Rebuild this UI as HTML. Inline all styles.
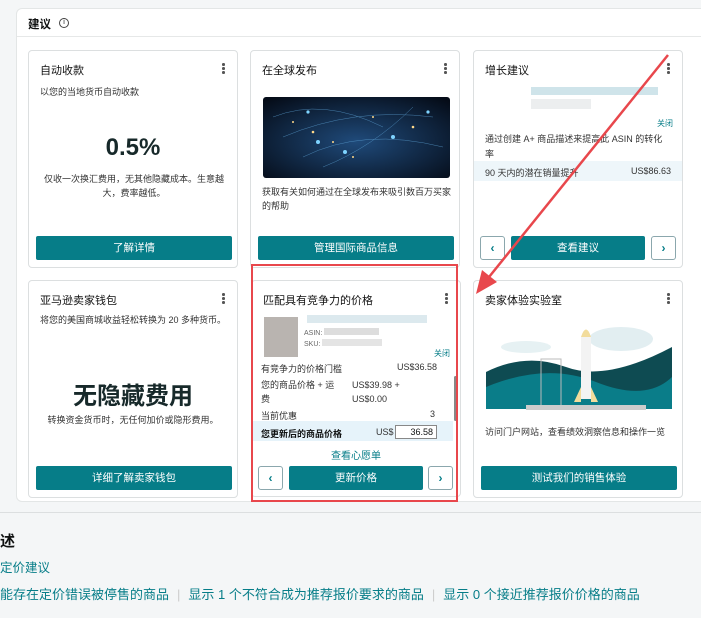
<!DOCTYPE html>
<html><head><meta charset="utf-8"><style>
*{box-sizing:border-box;margin:0;padding:0}
body{width:701px;height:618px;overflow:hidden;background:#f4f6f7;font-family:"Liberation Sans","Noto Sans CJK SC",sans-serif;color:#0f1111;position:relative;font-size:10px}
.a{position:absolute}
.panel{left:16px;top:8px;width:700px;height:494px;background:#fff;border:1px solid #e3e6e6;border-radius:6px}
.card{position:absolute;background:#fff;border:1px solid #dcdfe0;border-radius:4px;width:210px;height:218px}
.t{position:absolute;left:11px;top:11px;font-size:11px;color:#111}
.dots{position:absolute;right:12px;top:12px;width:3px}
.dots i{display:block;width:2.5px;height:2.5px;background:#555;border-radius:50%;margin-bottom:1.5px}
.btn{position:absolute;background:#067d88;color:#fff;font-size:10.5px;text-align:center;line-height:24px;height:24px;border-radius:2px}
.nav{position:absolute;width:25px;height:24px;border:1px solid #8ba7ad;border-radius:3px;color:#067d88;text-align:center;line-height:22px;font-size:12px;font-weight:bold;background:#fff}
.s{font-size:9px;color:#333}
</style></head><body>
<div class="a panel"></div>
<div class="a" style="left:28px;top:16px;font-size:11.5px;font-weight:bold">建议</div>
<div class="a" style="left:59px;top:18px;width:10px;height:10px;border:1px solid #444;border-radius:50%;font-size:7px;text-align:center;line-height:8px">i</div>
<div class="a" style="left:17px;top:36px;width:684px;height:1px;background:#e6e8e8"></div>

<div class="card" style="left:28px;top:50px">
<div class="t">自动收款</div><div class="dots"><i></i><i></i><i></i></div>
<div class="a s" style="left:11px;top:34px">以您的当地货币自动收款</div>
<div class="a" style="left:0;width:100%;top:83px;text-align:center;font-size:24px;font-weight:bold;color:#17292a">0.5%</div>
<div class="a s" style="left:12px;width:186px;top:121px;text-align:center;line-height:14px">仅收一次换汇费用，无其他隐藏成本。生意越大，费率越低。</div>
<div class="btn" style="left:7px;width:196px;top:185px">了解详情</div>
</div>

<div class="card" style="left:250px;top:50px">
<div class="t">在全球发布</div><div class="dots"><i></i><i></i><i></i></div>
<svg class="a" style="left:12px;top:46px" width="187" height="81"><defs><radialGradient id="g" cx="50%" cy="55%" r="70%"><stop offset="0" stop-color="#1f4a7a"/><stop offset="1" stop-color="#050c18"/></radialGradient></defs><rect width="187" height="81" rx="3" fill="url(#g)"/>
<g stroke="#5fa5d8" stroke-width="0.5" fill="none" opacity="0.7"><path d="M10 20Q60 0 120 30"/><path d="M20 40Q90 10 170 20"/><path d="M40 60Q100 30 180 50"/><path d="M60 70Q110 50 150 10"/></g>
<g fill="#ffd98a"><circle cx="30" cy="25" r="1"/><circle cx="50" cy="35" r="1.3"/><circle cx="70" cy="45" r="1"/><circle cx="110" cy="20" r="1"/><circle cx="150" cy="30" r="1.3"/><circle cx="90" cy="60" r="1"/></g>
<g fill="#7fd4ff"><circle cx="55" cy="45" r="2"/><circle cx="82" cy="55" r="2"/><circle cx="130" cy="40" r="2"/><circle cx="165" cy="15" r="1.6"/><circle cx="45" cy="15" r="1.6"/></g></svg>
<div class="a s" style="left:11px;top:134px;width:190px;line-height:14px">获取有关如何通过在全球发布来吸引数百万买家的帮助</div>
<div class="btn" style="left:7px;width:196px;top:185px">管理国际商品信息</div>
</div>

<div class="card" style="left:473px;top:50px">
<div class="t">增长建议</div><div class="dots"><i></i><i></i><i></i></div>
<div class="a" style="left:57px;top:36px;width:127px;height:8px;background:#cfe4ea"></div>
<div class="a" style="left:57px;top:48px;width:60px;height:10px;background:#eceeef"></div>
<div class="a" style="left:183px;top:67px;font-size:8px;color:#067d88">关闭</div>
<div class="a s" style="left:11px;top:81px;width:185px;line-height:15px">通过创建 A+ 商品描述来提高此 ASIN 的转化率</div>
<div class="a" style="left:0;top:110px;width:208px;height:20px;background:#eef6fa"></div>
<div class="a s" style="left:11px;top:115px">90 天内的潜在销量提升</div>
<div class="a s" style="right:11px;top:115px">US$86.63</div>
<div class="nav" style="left:6px;top:185px">‹</div>
<div class="btn" style="left:37px;width:134px;top:185px">查看建议</div>
<div class="nav" style="left:177px;top:185px">›</div>
</div>

<div class="card" style="left:28px;top:280px">
<div class="t">亚马逊卖家钱包</div><div class="dots"><i></i><i></i><i></i></div>
<div class="a s" style="left:11px;top:32px;width:190px;line-height:14px">将您的美国商城收益轻松转换为 20 多种货币。</div>
<div class="a" style="left:0;width:100%;top:95px;text-align:center;font-size:24px;font-weight:bold;color:#17292a">无隐藏费用</div>
<div class="a s" style="left:0;width:100%;top:132px;text-align:center">转换资金货币时，无任何加价或隐形费用。</div>
<div class="btn" style="left:7px;width:196px;top:185px">详细了解卖家钱包</div>
</div>

<div class="card" style="left:251px;top:280px;height:217px">
<div class="t">匹配具有竞争力的价格</div><div class="dots"><i></i><i></i><i></i></div>
<div class="a" style="left:12px;top:36px;width:34px;height:40px;background:#b9b4b0"></div>
<div class="a" style="left:55px;top:34px;width:120px;height:8px;background:#dce9ee"></div>
<div class="a" style="left:52px;top:47px;font-size:7px;color:#666">ASIN: <span style="display:inline-block;width:55px;height:7px;background:#ddd"></span></div>
<div class="a" style="left:52px;top:58px;font-size:7px;color:#666">SKU: <span style="display:inline-block;width:60px;height:7px;background:#e4e4e4"></span></div>
<div class="a" style="left:182px;top:67px;font-size:8px;color:#067d88">关闭</div>
<div class="a s" style="left:9px;top:81px">有竞争力的价格门槛</div><div class="a s" style="left:145px;top:81px">US$36.58</div>
<div class="a s" style="left:9px;top:97px;line-height:14px;width:80px">您的商品价格 + 运费</div><div class="a s" style="left:100px;top:97px;line-height:14px">US$39.98 +<br>US$0.00</div>
<div class="a s" style="left:9px;top:128px">当前优惠</div><div class="a s" style="left:178px;top:128px">3</div>
<div class="a" style="left:0;top:140px;width:201px;height:20px;background:#e6f3fa"></div>
<div class="a" style="left:9px;top:146px;font-size:9px;font-weight:bold">您更新后的商品价格</div>
<div class="a s" style="left:124px;top:146px">US$</div>
<div class="a" style="left:143px;top:144px;width:42px;height:14px;border:1px solid #888;background:#fff;font-size:9px;text-align:right;padding-right:3px;line-height:12px">36.58</div>
<div class="a" style="left:202px;top:95px;width:3px;height:45px;background:#888;border-radius:2px"></div>
<div class="a" style="left:0;width:100%;top:166px;text-align:center;font-size:10px;color:#067d88">查看心愿单</div>
<div class="nav" style="left:6px;top:185px">‹</div>
<div class="btn" style="left:37px;width:134px;top:185px">更新价格</div>
<div class="nav" style="left:176px;top:185px">›</div>
</div>
<div class="a" style="left:251px;top:264px;width:207px;height:238px;border:2px solid #e8474c"></div>

<div class="card" style="left:473px;top:280px">
<div class="t">卖家体验实验室</div><div class="dots"><i></i><i></i><i></i></div>
<svg class="a" style="left:12px;top:36px" width="186" height="102">
<ellipse cx="40" cy="30" rx="25" ry="6" fill="#e6f1f3"/><ellipse cx="135" cy="22" rx="32" ry="12" fill="#e2eef1"/>
<path d="M0 55Q40 35 80 50T186 30V90H0Z" fill="#0e4b52"/>
<path d="M0 70Q60 45 110 65T186 60V92H0Z" fill="#0a7d89"/>
<rect x="55" y="42" width="20" height="50" fill="none" stroke="#bbb" stroke-width="1"/>
<path d="M95 20Q100 5 105 20V82H95Z" fill="#f3f3f3"/><path d="M95 20Q100 5 105 20Z" fill="#f2dc9c"/>
<path d="M95 70L88 85H95ZM105 70L112 85H105Z" fill="#f2dc9c"/>
<rect x="40" y="88" width="120" height="5" fill="#ccc"/>
</svg>
<div class="a s" style="left:11px;top:144px">访问门户网站，查看绩效洞察信息和操作一览</div>
<div class="btn" style="left:7px;width:196px;top:185px">测试我们的销售体验</div>
</div>

<div class="a" style="left:0;top:512px;width:701px;height:1px;background:#dcdfe0"></div>
<div class="a" style="left:0;top:530px;font-size:15px;font-weight:bold">述</div>
<div class="a" style="left:0;top:557px;font-size:12.5px;color:#067d88">定价建议</div>
<div class="a" style="left:0;top:584px;font-size:13px;color:#067d88;white-space:nowrap">能存在定价错误被停售的商品<span style="color:#ccc;margin:0 8px">|</span>显示 1 个不符合成为推荐报价要求的商品<span style="color:#ccc;margin:0 8px">|</span>显示 0 个接近推荐报价价格的商品</div>

<svg class="a" style="left:0;top:0" width="701" height="618"><line x1="668" y1="55" x2="485" y2="282" stroke="#e8474c" stroke-width="2.5"/><path d="M476 294L482 270L497 282Z" fill="#e8474c"/></svg>
</body></html>
